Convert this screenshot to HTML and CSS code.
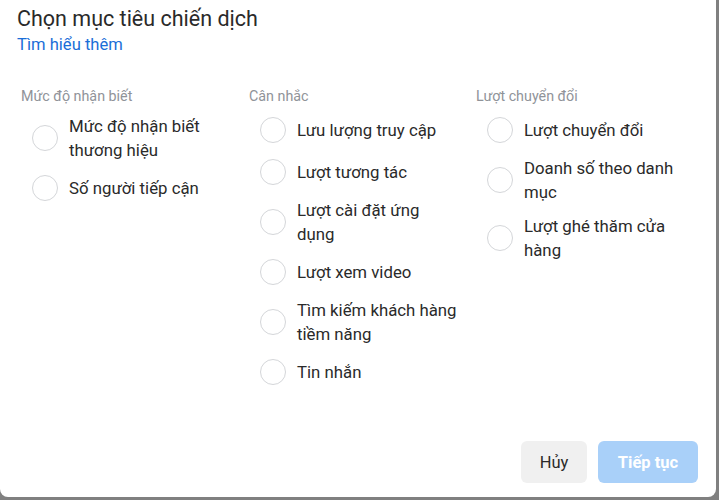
FILE: index.html
```html
<!DOCTYPE html>
<html lang="vi">
<head>
<meta charset="utf-8">
<link rel="stylesheet" href="styles.css">
</head>
<body>
<div class="modal">
  <div class="header">
    <div class="title">Chọn mục tiêu chiến dịch</div>
    <a class="link" href="#">Tìm hiểu thêm</a>
  </div>
  <div class="columns">
    <div class="col">
      <div class="heading">Mức độ nhận biết</div>
      <div class="list">
        <label class="opt"><span class="radio"></span><span class="text">Mức độ nhận biết thương hiệu</span></label>
        <label class="opt"><span class="radio"></span><span class="text">Số người tiếp cận</span></label>
      </div>
    </div>
    <div class="col">
      <div class="heading">Cân nhắc</div>
      <div class="list">
        <label class="opt"><span class="radio"></span><span class="text">Lưu lượng truy cập</span></label>
        <label class="opt"><span class="radio"></span><span class="text">Lượt tương tác</span></label>
        <label class="opt"><span class="radio"></span><span class="text">Lượt cài đặt ứng<br>dụng</span></label>
        <label class="opt"><span class="radio"></span><span class="text">Lượt xem video</span></label>
        <label class="opt"><span class="radio"></span><span class="text">Tìm kiếm khách hàng tiềm năng</span></label>
        <label class="opt"><span class="radio"></span><span class="text">Tin nhắn</span></label>
      </div>
    </div>
    <div class="col">
      <div class="heading">Lượt chuyển đổi</div>
      <div class="list">
        <label class="opt"><span class="radio"></span><span class="text">Lượt chuyển đổi</span></label>
        <label class="opt"><span class="radio"></span><span class="text">Doanh số theo danh mục</span></label>
        <label class="opt"><span class="radio"></span><span class="text">Lượt ghé thăm cửa hàng</span></label>
      </div>
    </div>
  </div>
  <div class="footer">
    <button class="btn cancel">Hủy</button>
    <button class="btn primary">Tiếp tục</button>
  </div>
</div>
</body>
</html>
```
FILE: styles.css
```css
html, body {
  margin: 0;
  padding: 0;
  background: #808080;
  height: 500px;
  overflow: hidden;
  font-family: Roboto, "Noto Sans", Arial, sans-serif;
}
.modal {
  width: 716px;
  height: 497px;
  background: #ffffff;
  border-radius: 0 0 8px 8px;
  display: flex;
  flex-direction: column;
  box-sizing: border-box;
}
.header {
  padding: 7px 16px 0 17px;
  display: flex;
  flex-direction: column;
  align-items: flex-start;
}
.title {
  font-size: 21.5px;
  line-height: 24px;
  color: #2a2a2a;
}
.link {
  margin-top: 4px;
  font-size: 16.6px;
  line-height: 20px;
  color: #1a6ed8;
  text-decoration: none;
}
.columns {
  display: grid;
  grid-template-columns: 228px 227px 1fr;
  padding-left: 21px;
  margin-top: 33px;
}
.heading {
  font-size: 14.3px;
  line-height: 16px;
  color: #909399;
}
.list {
  margin-top: 10px;
  display: flex;
  flex-direction: column;
  gap: 10px;
}
.opt {
  display: flex;
  align-items: center;
  min-height: 32px;
}
.radio {
  width: 26px;
  height: 26px;
  box-sizing: border-box;
  border: 1px solid #d4d6d9;
  border-radius: 50%;
  margin-left: 11px;
  flex: none;
}
.text {
  margin-left: 11px;
  width: 170px;
  font-size: 16.8px;
  line-height: 24px;
  color: #2a2a2a;
}
.footer {
  margin-top: auto;
  display: flex;
  justify-content: flex-end;
  gap: 11px;
  padding: 0 18px 14px 0;
}
.btn {
  height: 42px;
  border: none;
  border-radius: 6px;
  font-family: Roboto, "Noto Sans", Arial, sans-serif;
  font-size: 16.5px;
  padding: 0;
}
.cancel {
  width: 66px;
  background: #f0f0f0;
  color: #2a2a2a;
}
.primary {
  width: 100px;
  background: #a9d0f9;
  color: #ffffff;
  font-weight: bold;
}
```
